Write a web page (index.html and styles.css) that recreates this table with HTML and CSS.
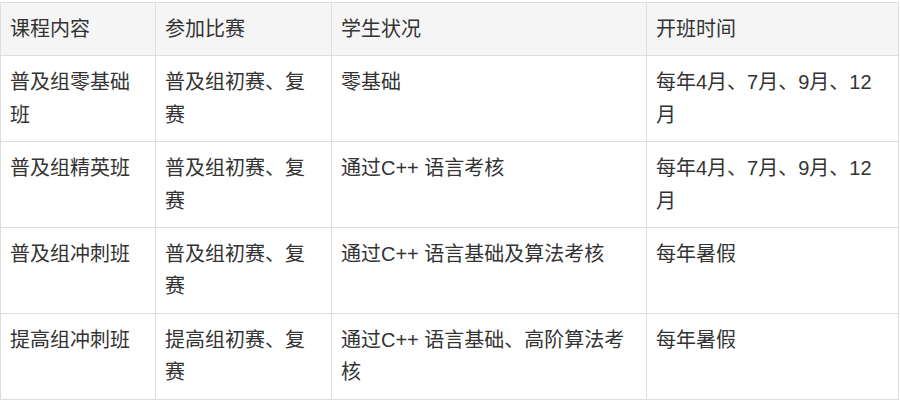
FILE: index.html
```html
<!DOCTYPE html>
<html lang="zh-CN">
<head>
<meta charset="utf-8">
<title>课程表</title>
<link rel="stylesheet" href="styles.css">
</head>
<body>
<table class="course-table">
  <colgroup>
    <col class="c1">
    <col class="c2">
    <col class="c3">
    <col class="c4">
  </colgroup>
  <thead>
    <tr>
      <th>课程内容</th>
      <th>参加比赛</th>
      <th>学生状况</th>
      <th>开班时间</th>
    </tr>
  </thead>
  <tbody>
    <tr>
      <td>普及组零基础班</td>
      <td>普及组初赛、复赛</td>
      <td>零基础</td>
      <td>每年4月、7月、9月、12月</td>
    </tr>
    <tr>
      <td>普及组精英班</td>
      <td>普及组初赛、复赛</td>
      <td>通过C++ 语言考核</td>
      <td>每年4月、7月、9月、12月</td>
    </tr>
    <tr>
      <td>普及组冲刺班</td>
      <td>普及组初赛、复赛</td>
      <td>通过C++ 语言基础及算法考核</td>
      <td>每年暑假</td>
    </tr>
    <tr>
      <td>提高组冲刺班</td>
      <td>提高组初赛、复赛</td>
      <td>通过C++ 语言基础、高阶算法考核</td>
      <td>每年暑假</td>
    </tr>
  </tbody>
</table>
</body>
</html>
```

FILE: styles.css
```css
html, body {
  margin: 0;
  padding: 0;
  background: #ffffff;
}

body {
  padding-top: 2px;
  font-family: "Liberation Sans", "Noto Sans CJK SC", sans-serif;
  font-size: 20px;
  color: #333333;
}

.course-table {
  border-collapse: collapse;
  table-layout: fixed;
  width: 898px;
}

.c1 { width: 155px; }
.c2 { width: 176px; }
.c3 { width: 315px; }
.c4 { width: 252px; }

.course-table th,
.course-table td {
  border: 1px solid #dddddd;
  padding: 10px 9px 10px 9px;
  line-height: 32.4px;
  text-align: left;
  vertical-align: top;
  font-weight: normal;
}

.course-table th {
  background: #f5f5f5;
}
```
